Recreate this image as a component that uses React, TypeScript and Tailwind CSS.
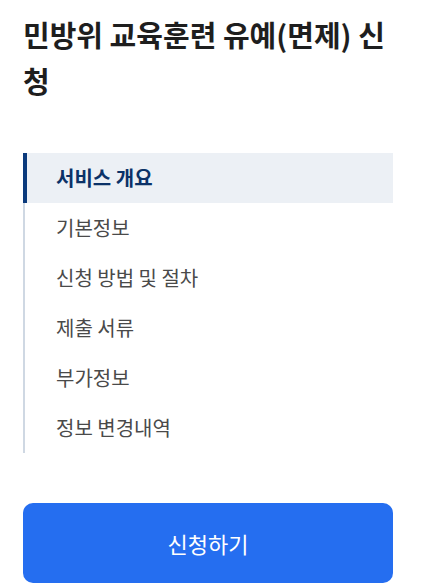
import React from 'react';

const menu = ['서비스 개요', '기본정보', '신청 방법 및 절차', '제출 서류', '부가정보', '정보 변경내역'];

export default function App() {
  return (
    <div
      className="min-h-screen bg-white pl-[23px] pr-[30px] pt-[11px]"
      style={{ fontFamily: '"Noto Sans CJK KR", "Noto Sans", sans-serif' }}
    >
      <h1 className="break-all text-[29px] font-bold leading-[46px] text-[#1e1e1e]">
        민방위 교육훈련 유예(면제) 신청
      </h1>

      <nav className="mt-[50px] border-l-2 border-[#cfd8e3]">
        <ul>
          {menu.map((item, i) =>
            i === 0 ? (
              <li
                key={item}
                className="-ml-[2px] flex h-[50px] items-center border-l-4 border-[#0b3a7c] bg-[#ecf0f5] pl-[29px] text-[20px] font-bold text-[#0b3268]"
              >
                {item}
              </li>
            ) : (
              <li key={item} className="flex h-[50px] items-center pl-[31px] text-[20px] text-[#4a4a4a]">
                {item}
              </li>
            ),
          )}
        </ul>
      </nav>

      <button className="mt-[50px] flex h-[80px] w-full items-center justify-center rounded-[10px] bg-[#256ef0] text-[22px] text-white">
        신청하기
      </button>
    </div>
  );
}
